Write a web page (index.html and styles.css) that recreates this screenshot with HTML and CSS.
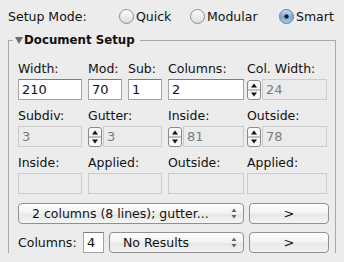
FILE: index.html
```html
<!DOCTYPE html>
<html lang="en">
<head>
    <meta charset="UTF-8">
    <title>Setup</title>
    <link rel="stylesheet" href="styles.css">
</head>
<body>
    <div class="mode-row">
        <span class="mode-label">Setup Mode:</span>
        <span class="radio quick"><span class="dot"></span>Quick</span>
        <span class="radio modular"><span class="dot"></span>Modular</span>
        <span class="radio on"><span class="dot"></span>Smart</span>
    </div>

    <fieldset class="group">
        <legend><span class="disclosure"></span>Document Setup</legend>

        <div class="grid">
            <!-- row 1 -->
            <div class="cell col-a">
                <div class="lbl">Width:</div>
                <div class="field">210</div>
            </div>
            <div class="cell col-b pair">
                <div class="half">
                    <div class="lbl">Mod:</div>
                    <div class="field">70</div>
                </div>
                <div class="half">
                    <div class="lbl">Sub:</div>
                    <div class="field">1</div>
                </div>
            </div>
            <div class="cell col-c">
                <div class="lbl">Columns:</div>
                <div class="field">2</div>
            </div>
            <div class="cell col-d">
                <div class="lbl">Col. Width:</div>
                <div class="spin">
                    <svg class="stepper" viewBox="0 0 14 20"><rect x="0.5" y="0.5" width="13" height="19" rx="2.5" fill="#f8f8f8" stroke="#8a8a8a"/><line x1="1" y1="10" x2="13" y2="10" stroke="#8a8a8a"/><path d="M4 7.5 L7 3.5 L10 7.5 Z" fill="#111"/><path d="M4 12.5 L7 16.5 L10 12.5 Z" fill="#111"/></svg>
                    <div class="field off">24</div>
                </div>
            </div>

            <!-- row 2 -->
            <div class="cell col-a">
                <div class="lbl">Subdiv:</div>
                <div class="field off">3</div>
            </div>
            <div class="cell col-b">
                <div class="lbl">Gutter:</div>
                <div class="spin">
                    <svg class="stepper" viewBox="0 0 14 20"><rect x="0.5" y="0.5" width="13" height="19" rx="2.5" fill="#f8f8f8" stroke="#8a8a8a"/><line x1="1" y1="10" x2="13" y2="10" stroke="#8a8a8a"/><path d="M4 7.5 L7 3.5 L10 7.5 Z" fill="#111"/><path d="M4 12.5 L7 16.5 L10 12.5 Z" fill="#111"/></svg>
                    <div class="field off">3</div>
                </div>
            </div>
            <div class="cell col-c">
                <div class="lbl">Inside:</div>
                <div class="spin">
                    <svg class="stepper" viewBox="0 0 14 20"><rect x="0.5" y="0.5" width="13" height="19" rx="2.5" fill="#f8f8f8" stroke="#8a8a8a"/><line x1="1" y1="10" x2="13" y2="10" stroke="#8a8a8a"/><path d="M4 7.5 L7 3.5 L10 7.5 Z" fill="#111"/><path d="M4 12.5 L7 16.5 L10 12.5 Z" fill="#111"/></svg>
                    <div class="field off">81</div>
                </div>
            </div>
            <div class="cell col-d">
                <div class="lbl">Outside:</div>
                <div class="spin">
                    <svg class="stepper" viewBox="0 0 14 20"><rect x="0.5" y="0.5" width="13" height="19" rx="2.5" fill="#f8f8f8" stroke="#8a8a8a"/><line x1="1" y1="10" x2="13" y2="10" stroke="#8a8a8a"/><path d="M4 7.5 L7 3.5 L10 7.5 Z" fill="#111"/><path d="M4 12.5 L7 16.5 L10 12.5 Z" fill="#111"/></svg>
                    <div class="field off">78</div>
                </div>
            </div>

            <!-- row 3 -->
            <div class="cell col-a">
                <div class="lbl">Inside:</div>
                <div class="field off"></div>
            </div>
            <div class="cell col-b">
                <div class="lbl">Applied:</div>
                <div class="field off"></div>
            </div>
            <div class="cell col-c">
                <div class="lbl">Outside:</div>
                <div class="field off"></div>
            </div>
            <div class="cell col-d">
                <div class="lbl">Applied:</div>
                <div class="field off"></div>
            </div>
        </div>

        <div class="action-row">
            <div class="popup wide">
                <span>2 columns (8 lines); gutter...</span>
                <svg class="arrows" viewBox="0 0 6 11"><path d="M0.5 4 L3 0.5 L5.5 4 Z" fill="#666"/><path d="M0.5 7 L3 10.5 L5.5 7 Z" fill="#666"/></svg>
            </div>
            <div class="button">&gt;</div>
        </div>

        <div class="action-row">
            <span class="row-label">Columns:</span>
            <div class="field small">4</div>
            <div class="popup narrow">
                <span>No Results</span>
                <svg class="arrows" viewBox="0 0 6 11"><path d="M0.5 4 L3 0.5 L5.5 4 Z" fill="#666"/><path d="M0.5 7 L3 10.5 L5.5 7 Z" fill="#666"/></svg>
            </div>
            <div class="button">&gt;</div>
        </div>
    </fieldset>
</body>
</html>
```

FILE: styles.css
```css
body {
    margin: 0;
    background-color: #ececec;
    font-family: "DejaVu Sans", "Liberation Sans", sans-serif;
    font-size: 12.5px;
    color: #111;
}

/* top radio row */
.mode-row {
    display: flex;
    align-items: center;
    height: 18px;
    padding: 7px 0 8px 8px;
}
.mode-label {
    width: 111px;
}
.radio {
    display: flex;
    align-items: center;
}
.radio.quick {
    width: 71px;
}
.radio.modular {
    width: 89px;
}
.dot {
    width: 13px;
    height: 13px;
    margin-right: 2px;
    border: 1px solid #8e8e8e;
    border-radius: 50%;
    background: linear-gradient(#fdfdfd, #dcdcdc);
    box-sizing: content-box;
}
.radio.on .dot {
    border-color: #5a7ea8;
    background: radial-gradient(circle at 50% 50%, #1a1a1a 0, #1a1a1a 1.8px, transparent 2.4px),
                linear-gradient(#c9dcf1, #7fa7d6 55%, #a9c9ec);
}

/* group box */
.group {
    margin: 0 8px;
    padding: 0 0 0 9px;
    border: 1px solid #a9a9a9;
    border-bottom: none;
}
.group legend {
    display: flex;
    align-items: center;
    margin-left: -5px;
    padding: 0 5px 0 2px;
    font-weight: bold;
    font-size: 11.8px;
    line-height: 15px;
}
.disclosure {
    width: 0;
    height: 0;
    margin-right: 1px;
    border-left: 4.5px solid transparent;
    border-right: 4.5px solid transparent;
    border-top: 7px solid #6e6e6e;
}

.grid {
    display: grid;
    grid-template-columns: 70px 80px 79px 80px;
    row-gap: 8px;
    padding-top: 13px;
}
.lbl {
    height: 15px;
    line-height: 15px;
    margin-bottom: 3px;
}
.col-a .field {
    width: 64px;
}
.col-b > .field {
    width: 74px;
}
.col-c .field,
.col-c .spin {
    width: 76px;
}
.col-d .field,
.col-d .spin {
    width: 80px;
}
.pair {
    display: flex;
    gap: 6px;
}
.pair .field {
    width: 34px;
}

.field {
    box-sizing: border-box;
    height: 21px;
    padding: 0 3px;
    border: 1px solid #a3a3a3;
    border-top-color: #7d7d7d;
    background: #fff;
    font-size: 13px;
    line-height: 19px;
}
.field.off {
    border-color: #cbcbcb;
    background: #ebebeb;
    color: #7b7b7b;
}

.spin {
    display: flex;
    align-items: center;
    width: 74px;
}
.spin .field,
.col-c .spin .field,
.col-d .spin .field {
    flex: 1;
    width: auto;
    margin-left: 1px;
}
.stepper {
    width: 14px;
    height: 20px;
    flex-shrink: 0;
}

/* popups and buttons */
.action-row {
    display: flex;
    align-items: center;
    margin-top: 9px;
}
.action-row + .action-row {
    margin-top: 8px;
}
.popup,
.button {
    box-sizing: border-box;
    height: 21px;
    border: 1px solid #909090;
    border-radius: 4px;
    background: linear-gradient(#ffffff, #f1f1f1 50%, #e6e6e6 51%, #f4f4f4);
}
.popup {
    display: flex;
    align-items: center;
    justify-content: space-between;
    padding: 0 6px 0 13px;
    font-size: 12.5px;
}
.popup.wide {
    width: 226px;
}
.popup.narrow {
    width: 135px;
}
.arrows {
    width: 6px;
    height: 11px;
}
.button {
    width: 80px;
    margin-left: 5px;
    text-align: center;
    line-height: 19px;
    font-size: 13px;
}
.row-label {
    width: 65px;
}
.field.small {
    width: 21px;
    margin-right: 5px;
}
```
